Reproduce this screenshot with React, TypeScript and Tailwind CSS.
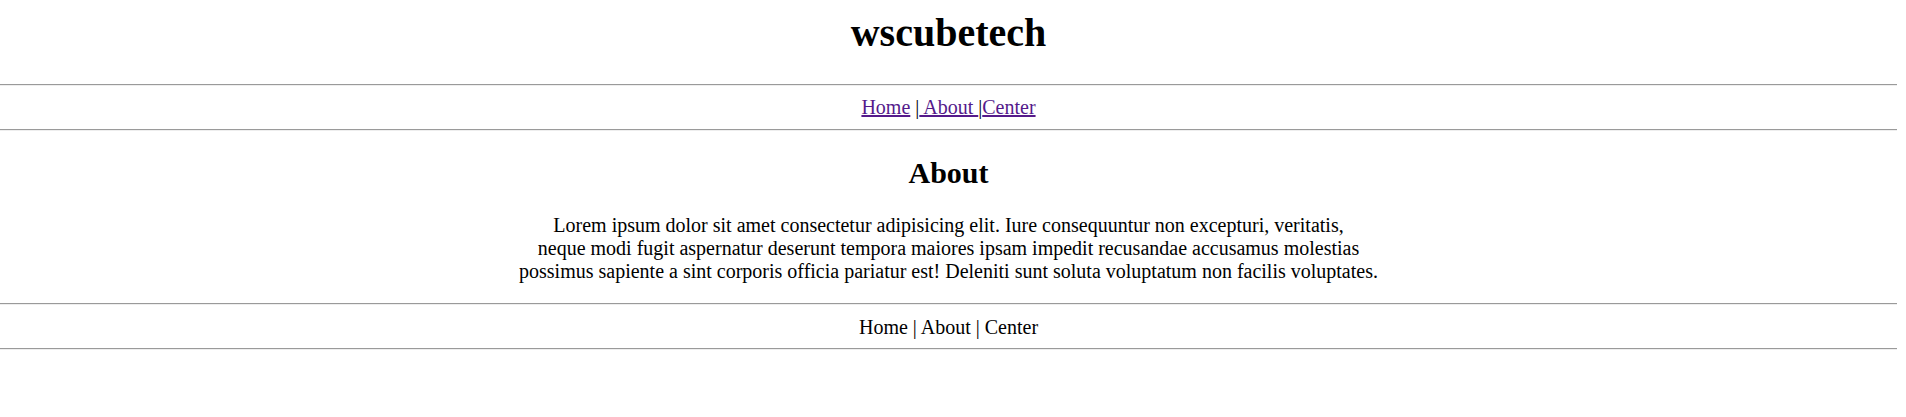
export default function App() {
  const rule = 'h-[2px] border-t border-b border-t-[#9a9a9a] border-b-[#eeeeee]';

  return (
    <div className="w-[1897px] bg-white text-black text-center font-['Liberation_Serif','Times_New_Roman',serif] text-[20px] leading-[23px]">
      <h1 className="pt-[10px] mb-[28px] text-[40px] leading-[46px] font-bold">wscubetech</h1>
      <div className={rule} />

      <nav className="mt-[10px] mb-[10px]">
        <a href="#" className="text-[#551a8b] underline">Home</a> |
        <a href="#" className="text-[#551a8b] underline"> About </a>|
        <a href="#" className="text-[#551a8b] underline">Center</a>
      </nav>
      <div className={rule} />

      <section>
        <h2 className="mt-[25px] mb-[24px] text-[30px] leading-[34px] font-bold">About</h2>
        <p className="mb-[20px]">
          Lorem ipsum dolor sit amet consectetur adipisicing elit. Iure consequuntur non excepturi, veritatis,
          <br />
          neque modi fugit aspernatur deserunt tempora maiores ipsam impedit recusandae accusamus molestias
          <br />
          possimus sapiente a sint corporis officia pariatur est! Deleniti sunt soluta voluptatum non facilis voluptates.
        </p>
      </section>
      <div className={rule} />

      <footer className="mt-[11px] mb-[9px]">Home | About | Center</footer>
      <div className={rule} />
    </div>
  );
}
